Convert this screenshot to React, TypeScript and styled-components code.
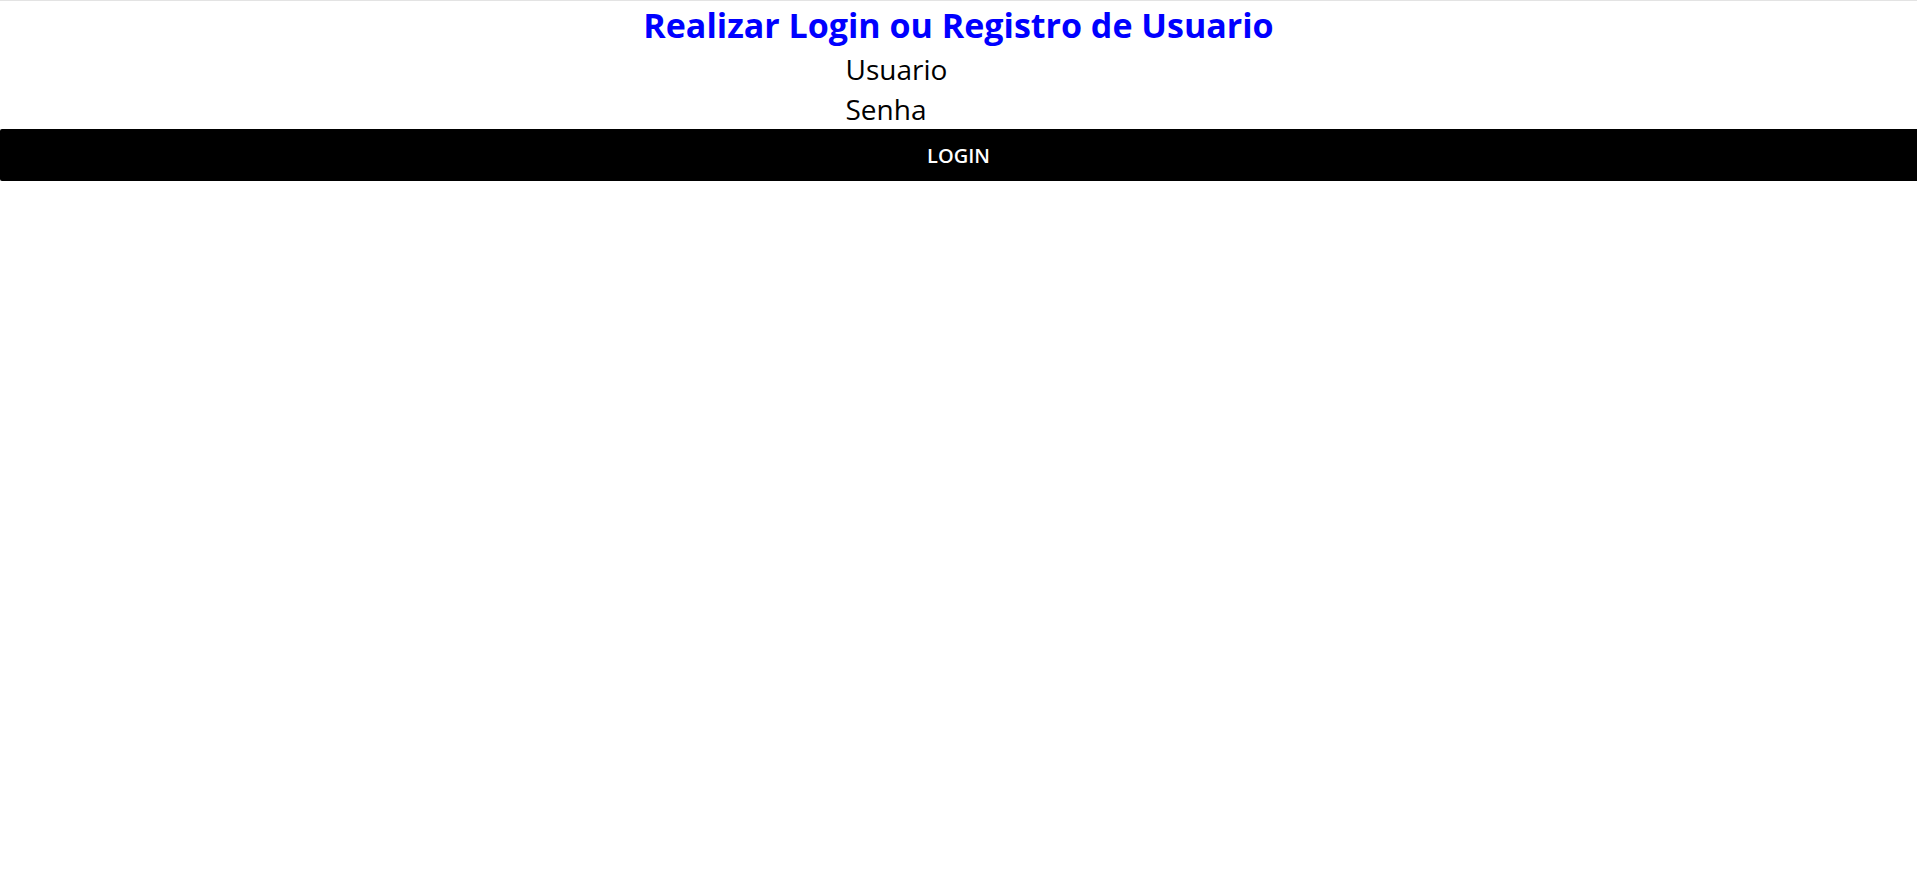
import * as React from "react";
import styled, { createGlobalStyle } from "styled-components";

const GlobalStyle = createGlobalStyle`
  body {
    margin: 0;
    background: #ffffff;
    font-family: "Open Sans", "Noto Sans", sans-serif;
  }
`;

const Page = styled.main`
  border-top: 1px solid #e3e3e3;
`;

const Title = styled.h1`
  margin: 0;
  text-align: center;
  font-size: 34px;
  line-height: 49px;
  font-weight: 700;
  color: #0000ff;
`;

const Form = styled.form`
  display: flex;
  flex-direction: column;
`;

const Fields = styled.div`
  width: 226px;
  margin: 0 auto;
  display: flex;
  flex-direction: column;
`;

const Label = styled.label`
  font-size: 28px;
  line-height: 39.5px;
  color: #000000;
`;

const Button = styled.button`
  display: block;
  width: 100%;
  height: 52px;
  border: 0;
  border-radius: 2px 0 0 2px;
  background: #000000;
  color: #ffffff;
  font-family: inherit;
  font-size: 20px;
  font-weight: 600;
  padding-top: 2px;
  cursor: pointer;
`;

export default function App() {
  return (
    <>
      <GlobalStyle />
      <Page>
        <Title>Realizar Login ou Registro de Usuario</Title>
        <Form onSubmit={(e) => e.preventDefault()}>
          <Fields>
            <Label>Usuario</Label>
            <Label>Senha</Label>
          </Fields>
          <Button type="submit">LOGIN</Button>
        </Form>
      </Page>
    </>
  );
}
